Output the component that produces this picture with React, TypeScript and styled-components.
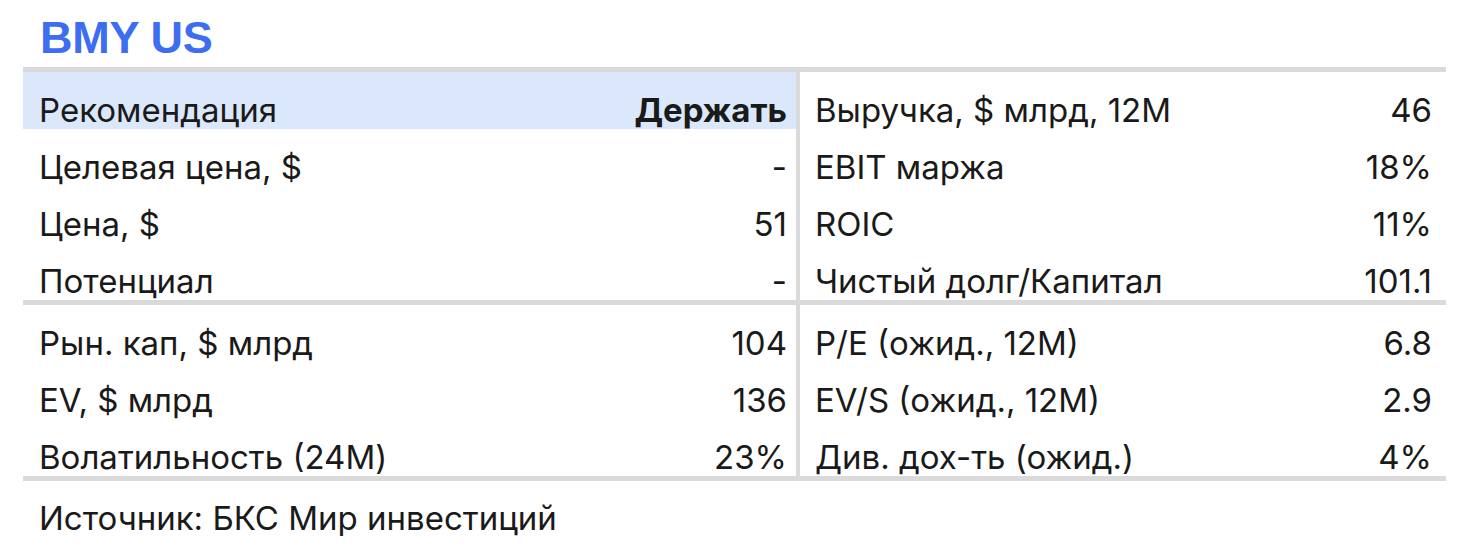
import React from 'react';
import styled, {createGlobalStyle} from 'styled-components';

const GlobalStyle = createGlobalStyle`
  html, body {
    margin: 0;
    padding: 0;
    background: #ffffff;
  }
  body {
    font-family: Inter, "Liberation Sans", Arial, sans-serif;
    color: #1a1a1a;
  }
`;

interface Row {
    label: string;
    value: string;
    bold?: boolean;
    highlight?: boolean;
}

const topLeft: Row[] = [
    {label: 'Рекомендация', value: 'Держать', bold: true, highlight: true},
    {label: 'Целевая цена, $', value: '-'},
    {label: 'Цена, $', value: '51'},
    {label: 'Потенциал', value: '-'},
];

const topRight: Row[] = [
    {label: 'Выручка, $ млрд, 12M', value: '46'},
    {label: 'EBIT маржа', value: '18%'},
    {label: 'ROIC', value: '11%'},
    {label: 'Чистый долг/Капитал', value: '101.1'},
];

const bottomLeft: Row[] = [
    {label: 'Рын. кап, $ млрд', value: '104'},
    {label: 'EV, $ млрд', value: '136'},
    {label: 'Волатильность (24M)', value: '23%'},
];

const bottomRight: Row[] = [
    {label: 'P/E (ожид., 12M)', value: '6.8'},
    {label: 'EV/S (ожид., 12M)', value: '2.9'},
    {label: 'Див. дох-ть (ожид.)', value: '4%'},
];

const App: React.FC = () => {
    return (
        <Page>
            <GlobalStyle/>
            <Title>BMY US</Title>
            <Table>
                <Section>
                    <Column side="left">
                        {topLeft.map(r => (
                            <DataRow key={r.label} side="left" highlight={r.highlight}>
                                <Label>{r.label}</Label>
                                <Value bold={r.bold}>{r.value}</Value>
                            </DataRow>
                        ))}
                    </Column>
                    <Column side="right">
                        {topRight.map(r => (
                            <DataRow key={r.label} side="right">
                                <Label>{r.label}</Label>
                                <Value>{r.value}</Value>
                            </DataRow>
                        ))}
                    </Column>
                </Section>
                <Section>
                    <Column side="left">
                        {bottomLeft.map(r => (
                            <DataRow key={r.label} side="left">
                                <Label>{r.label}</Label>
                                <Value>{r.value}</Value>
                            </DataRow>
                        ))}
                    </Column>
                    <Column side="right">
                        {bottomRight.map(r => (
                            <DataRow key={r.label} side="right">
                                <Label>{r.label}</Label>
                                <Value>{r.value}</Value>
                            </DataRow>
                        ))}
                    </Column>
                </Section>
            </Table>
            <Source>Источник: БКС Мир инвестиций</Source>
        </Page>
    )
}
export default App;

const Page = styled.div`
  width: 1423px;
  padding: 15px 0 0 23px;
`;

const Title = styled.h1`
  margin: 0 0 6px 17px;
  font-family: "Liberation Sans", Arial, sans-serif;
  font-size: 45px;
  line-height: 46px;
  font-weight: 700;
  letter-spacing: -0.3px;
  color: #3d6df0;
`;

const Table = styled.div`
  border-top: 5px solid #dadada;
`;

const Section = styled.div`
  display: grid;
  grid-template-columns: 777px 1fr;
  border-bottom: 5px solid #dadada;
`;

const Column = styled.div<{side: 'left' | 'right'}>`
  display: flex;
  flex-direction: column;
  border-right: ${p => p.side === 'left' ? '4px solid #dadada' : 'none'};
`;

const DataRow = styled.div<{side: 'left' | 'right'; highlight?: boolean}>`
  display: flex;
  justify-content: space-between;
  box-sizing: border-box;
  height: 57px;
  padding: 20px ${p => p.side === 'left' ? '9px' : '14px'} 0 ${p => p.side === 'left' ? '16px' : '15px'};
  background: ${p => p.highlight ? '#dbe8fb' : 'transparent'};
  font-size: 33px;
  line-height: 36px;
`;

const Label = styled.span`
  white-space: nowrap;
`;

const Value = styled.span<{bold?: boolean}>`
  white-space: nowrap;
  font-weight: ${p => p.bold ? 700 : 400};
`;

const Source = styled.div`
  margin: 19px 0 0 16px;
  font-size: 33px;
  line-height: 36px;
`;
